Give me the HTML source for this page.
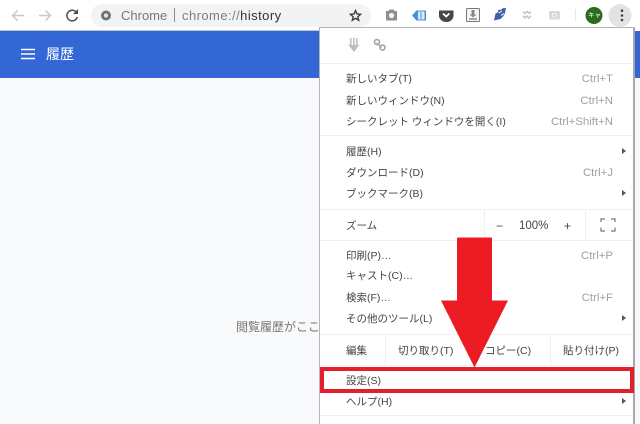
<!DOCTYPE html>
<html lang="ja"><head><meta charset="utf-8"><title>履歴</title>
<style>
html,body{margin:0;padding:0;width:640px;height:424px;overflow:hidden;background:#f8f9fa;}
body{font-family:"Liberation Sans","Noto Sans CJK JP",sans-serif;font-size:10.5px;color:#444;}
#w{position:relative;width:640px;height:424px;overflow:hidden;filter:blur(.3px);}
.a{position:absolute;white-space:nowrap;}
.m{position:absolute;left:346px;white-space:nowrap;line-height:14px;height:14px;}
.s{position:absolute;right:27px;white-space:nowrap;line-height:14px;color:#a0a0a0;font-size:11.4px;}
.sep{position:absolute;left:320px;width:312px;height:1px;background:#efefef;}
.v{position:absolute;width:1px;background:#efefef;}
.tri{position:absolute;left:622px;width:0;height:0;border-left:4px solid #555;border-top:3.5px solid transparent;border-bottom:3.5px solid transparent;}
</style></head><body><div id="w">
<div class="a" style="left:0;top:0;width:640px;height:31px;background:#fff"></div>
<div class="a" style="left:0;top:31px;width:640px;height:47px;background:#3367d6"></div>
<svg class="a" style="left:0;top:0" width="90" height="32" viewBox="0 0 90 32" fill="none">
<path d="M24 15.500H12.500M17.500 10.500l-5 5 5 5" stroke="#c6c8cb" stroke-width="1.500"/>
<path d="M39 15.500H50.500M45.500 10.500l5 5-5 5" stroke="#c6c8cb" stroke-width="1.500"/>
<path d="M76.500 12.500a5.300 5.300 0 1 0 .8 4.500" stroke="#4a4d50" stroke-width="1.500"/><path d="M78 9v5h-5z" fill="#4a4d50"/>
</svg>
<div class="a" style="left:91px;top:4px;width:280px;height:23px;border-radius:12px;background:#f1f3f4"></div>
<svg class="a" style="left:100px;top:9px" width="13" height="13" viewBox="0 0 13 13"><circle cx="6" cy="6.500" r="5" fill="#6e7276"/><circle cx="6" cy="6.500" r="2.100" fill="#e8e8e8"/></svg>
<div class="a" style="left:121px;top:7px;font-size:13px;line-height:17px;color:#75787b">Chrome</div>
<div class="a" style="left:174px;top:8px;width:1px;height:14px;background:#8a8d90"></div>
<div class="a" style="left:182px;top:7px;font-size:13px;line-height:17px;letter-spacing:.44px;color:#7d8083">chrome://<span style="color:#333">history</span></div>
<svg class="a" style="left:349px;top:9px" width="13" height="13" viewBox="0 0 15 15"><path d="M7.500 1.800l1.700 3.900 4.200.4-3.200 2.800 1 4.100-3.700-2.200-3.700 2.200 1-4.100-3.200-2.800 4.200-.4z" fill="none" stroke="#3e3e3e" stroke-width="1.600"/></svg>
<svg class="a" style="left:380px;top:4px" width="260" height="27" viewBox="380 4 260 27">
<path d="M386 11h2.500l1-1.500h4l1 1.500h2.500v9.500h-11z" fill="#8f8f8f"/><circle cx="391.500" cy="15.500" r="2.600" fill="#f4f4f4"/>
<path d="M412 15.500l4.500-5h9.500v10h-9.500z" fill="#4a8fd8"/><rect x="418" y="11.500" width="6.500" height="8" fill="#dcebf8"/><path d="M421 12v7" stroke="#4a8fd8"/>
<path d="M439 10.500h14.500v5a7.200 6.500 0 0 1-14.500 0z" fill="#464646"/><path d="M443 13.500l3.200 3 3.200-3" stroke="#fff" stroke-width="1.800" fill="none"/>
<rect x="466.500" y="8.500" width="13" height="13" rx="1" fill="#f6f6f6" stroke="#777"/><path d="M471.500 10v4.500h-2l3.500 3 3.500-3h-2V10z" fill="#8a8a8a"/><path d="M469 19h8" stroke="#555"/>
<path d="M494 20.500l1.500-7 2-1 1-2.500 3-.5 1-1.200 3.500-.3-1 5-1.500 3-3 3z" fill="#3f5fa6"/><path d="M498.500 13l3.500-2M501 15.500l3-2" stroke="#dfe6f5" stroke-width="1.100"/>
<path d="M523 11.500l2 2 2-2 2 2 2-2M523 16l2 2 2-2 2 2 2-2" stroke="#c2c2c2" stroke-width="1.500" fill="none"/>
<rect x="549" y="11" width="11" height="8.500" rx="1.500" fill="#d9d9d9"/><circle cx="554.500" cy="15.200" r="2" fill="none" stroke="#f5f5f5"/>
<path d="M575.500 9v12" stroke="#e4e4e4"/>
<circle cx="620" cy="15.500" r="11.500" fill="#e3e3e3"/>
<circle cx="622" cy="10.700" r="1.300" fill="#444"/><circle cx="622" cy="15.500" r="1.300" fill="#444"/><circle cx="622" cy="20" r="1.300" fill="#444"/>
<circle cx="594" cy="15.500" r="8.500" fill="#2c6a1d"/>
</svg>
<div class="a" style="left:588px;top:11px;width:12px;text-align:center;font-size:6.500px;line-height:9px;color:#fff">キャ</div>
<div class="a" style="left:0;top:30px;width:320px;height:1px;background:#b9c4da"></div>
<svg class="a" style="left:20px;top:48px" width="16" height="12"><path d="M1 1.500h14M1 6h14M1 10.500h14" stroke="#fff" stroke-width="1.500"/></svg>
<div class="a" style="left:46px;top:46px;font-size:14px;line-height:17px;color:#fff">履歴</div>
<div class="a" style="left:236px;top:319px;font-size:12px;line-height:16px;color:#757575">閲覧履歴がここ</div>

<div class="a" style="left:319px;top:27px;width:313px;height:397px;background:#fff;border-left:1px solid #b5b5b5;border-right:2px solid #a8a8a8;border-top:1px solid #b5b5b5"></div>
<svg class="a" style="left:344px;top:36px" width="46" height="18" viewBox="0 0 46 18"><path d="M6 2h1.500v7H9V1.500h1.500V9H12V2h1.500v7l2-.5L10 16 4 8.500l2 .5z" fill="#bdbdbd"/><path d="M32.500 7l5 4.500" stroke="#aaa" stroke-width="1.500"/><circle cx="33" cy="6" r="2.500" fill="none" stroke="#aaa" stroke-width="1.800"/><circle cx="38.500" cy="11.500" r="2.500" fill="none" stroke="#aaa" stroke-width="1.800"/></svg>
<div class="sep" style="top:63px"></div><div class="sep" style="top:135px"></div><div class="sep" style="top:209px"></div><div class="sep" style="top:240px"></div><div class="sep" style="top:334px"></div><div class="sep" style="top:365px"></div><div class="sep" style="top:415px"></div>
<div class="m" style="top:72px">新しいタブ(T)</div><div class="s" style="top:72px">Ctrl+T</div>
<div class="m" style="top:94px">新しいウィンドウ(N)</div><div class="s" style="top:94px">Ctrl+N</div>
<div class="m" style="top:115px">シークレット ウィンドウを開く(I)</div><div class="s" style="top:115px">Ctrl+Shift+N</div>
<div class="m" style="top:145px">履歴(H)</div><div class="tri" style="top:148px"></div>
<div class="m" style="top:166px">ダウンロード(D)</div><div class="s" style="top:166px">Ctrl+J</div>
<div class="m" style="top:187px">ブックマーク(B)</div><div class="tri" style="top:190px"></div>
<div class="m" style="top:219px">ズーム</div>
<div class="v" style="left:484px;top:210px;height:30px"></div><div class="v" style="left:585px;top:210px;height:30px"></div>
<div class="a" style="left:496px;top:219px;line-height:14px;font-size:12px">−</div>
<div class="a" style="left:519px;top:219px;line-height:14px;font-size:11.500px">100%</div>
<div class="a" style="left:564px;top:219px;line-height:14px;font-size:12px">+</div>
<svg class="a" style="left:600px;top:218px" width="16" height="14" fill="none" stroke="#777" stroke-width="1.200"><path d="M1 4V1h4M11 1h4v3M1 9.500V13h4M11 13h4V9.500"/></svg>
<div class="m" style="top:249px">印刷(P)…</div><div class="s" style="top:249px">Ctrl+P</div>
<div class="m" style="top:269px">キャスト(C)…</div>
<div class="m" style="top:291px">検索(F)…</div><div class="s" style="top:291px">Ctrl+F</div>
<div class="m" style="top:312px">その他のツール(L)</div><div class="tri" style="top:315px"></div>
<div class="m" style="top:344px">編集</div>
<div class="v" style="left:385px;top:335px;height:30px"></div><div class="v" style="left:550px;top:335px;height:30px"></div>
<div class="a" style="left:398px;top:344px;line-height:14px">切り取り(T)</div>
<div class="a" style="left:485px;top:344px;line-height:14px">コピー(C)</div>
<div class="a" style="left:563px;top:344px;line-height:14px">貼り付け(P)</div>
<div class="m" style="top:374px">設定(S)</div>
<div class="m" style="top:395px">ヘルプ(H)</div><div class="tri" style="top:398px"></div>

<div class="a" style="left:320px;top:367px;width:306px;height:18px;border:4px solid #e2202c"></div>
<svg class="a" style="left:430px;top:230px" width="90" height="140" viewBox="0 0 90 140"><path d="M28 7.500h33a1 1 0 0 1 1 1V70.500h16l-33.500 67L11 70.500h16V8.500a1 1 0 0 1 1-1z" fill="#ed1c24"/></svg>
</div></body></html>
